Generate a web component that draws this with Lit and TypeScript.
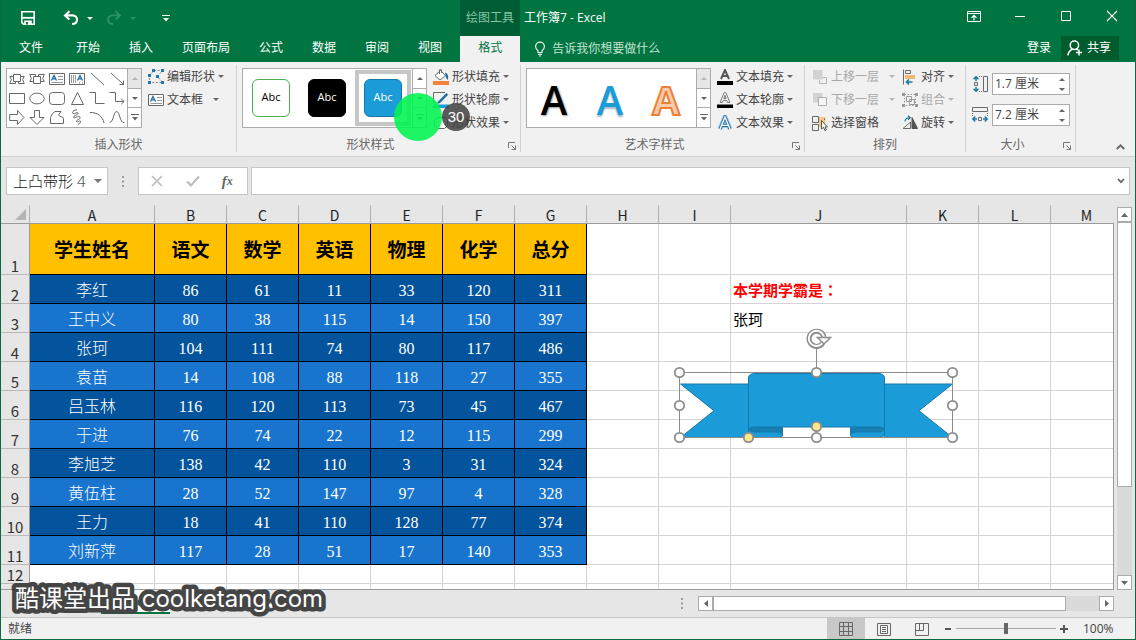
import { LitElement, html, css, svg, nothing } from "lit";
import { customElement, property, state } from "lit/decorators.js";
import { classMap } from "lit/directives/class-map.js";

const letterA = (x: number, y: number, s: number) => svg`<path d=${`M${x} ${y + s}L${x + s / 2} ${y}L${x + s} ${y + s}M${x + s * 0.22} ${y + s * 0.66}H${x + s * 0.78}`} stroke="#1f6fa5" stroke-width="1.3"/>`;

const ICONS: Record<string, unknown> = {
  save: svg`<g stroke="#fff" stroke-width="1.6"><path d="M1.8 1.8H14.2V14.2H3.6L1.8 12.6Z"/><path d="M2 7.8H14" stroke-width="1.8"/></g><path d="M4.2 10.5H11.8V14.5H4.2Z" fill="#fff" stroke="none"/><path d="M6 12H8V14.5H6Z" fill="#007541" stroke="none"/>`,
  undo: svg`<path d="M6.4 1.2L2 5.4L6.4 9.6M2.4 5.4H9.4C15.6 5.6 15.6 13.8 9 14" stroke="#fff" stroke-width="2.1"/>`,
  redo: svg`<path d="M9.6 1.2L14 5.4L9.6 9.6M13.6 5.4H6.6C.4 5.6 .4 13.8 7 14" stroke="#2b9467" stroke-width="1.9"/>`,
  display: svg`<g stroke="#fff"><path d="M1.5 3.5H14.5V13.5H1.5ZM1.5 5.5H14.5"/><path d="M8 12.5V7.5M5.5 9.8L8 7.3L10.5 9.8" stroke-width="1.2"/></g>`,
  min: svg`<path d="M3 8.5H13" stroke="#fff"/>`,
  max: svg`<path d="M3.5 3.5H12.5V12.5H3.5Z" stroke="#fff"/>`,
  close: svg`<path d="M3 3L13 13M13 3L3 13" stroke="#fff" stroke-width="1.1"/>`,
  bulb: svg`<path d="M6 11.5V9.8C4.4 8.6 3.6 7.3 3.6 5.6A4.4 4.4 0 0 1 12.4 5.6C12.4 7.3 11.6 8.6 10 9.8V11.5ZM6 13.4H10M7 15H9" stroke="#e4f3ea" stroke-width="1.2"/>`,
  person: svg`<g stroke="#fff" stroke-width="1.5"><circle cx="7.4" cy="5.2" r="4.2"/><path d="M.9 15.4C1.3 11.8 3.2 10.2 5.6 9M9.2 9L10.8 10M12 9.5V15.5M9 12.5H15"/></g>`,
  ribUp: svg`<path d="M4.5 3.5H11.5V10.5H4.5ZM4.5 5.5H.8L2.3 8.5L.8 12.5H6.5V10.5M11.5 5.5H15.2L13.7 8.5L15.2 12.5H9.5V10.5M2.5 5.5V4.5"/>`,
  ribDown: svg`<path d="M4.5 5.5H11.5V12.5H4.5ZM4.5 10.5H.8L2.3 7.5L.8 3.5H6.5V5.5M11.5 10.5H15.2L13.7 7.5L15.2 3.5H9.5V5.5"/>`,
  textH: svg`<path d="M.5 2.5H15.5V13.5H.5Z" fill="#fff"/>${letterA(2.5, 4.5, 5)}<path d="M9 5.5H14M9 8.5H14M2.5 11.5H14" stroke="#999"/>`,
  textV: svg`<path d="M.5 2.5H15.5V13.5H.5Z" fill="#fff"/>${letterA(8.5, 4.5, 5)}<path d="M2.5 4V12M4.5 4V12M6.5 4V12M13.5 11V12.5M10.5 11V12.5" stroke="#999"/>`,
  line: svg`<path d="M2 2L15 14"/>`,
  arrow: svg`<path d="M2 2L14.5 13.5M14.5 9.5V13.5H10.5"/>`,
  rect: svg`<path d="M.5 3.5H15.5V13.5H.5Z"/>`,
  oval: svg`<ellipse cx="8" cy="8.5" rx="7.2" ry="5.4"/>`,
  round: svg`<rect x=".5" y="2.5" width="15" height="12" rx="3"/>`,
  tri: svg`<path d="M8.5 2.5L14.5 14.5H2.5Z"/>`,
  elbow: svg`<path d="M.5 2.5H6.5V13.5H15.5"/>`,
  elbowArrow: svg`<path d="M.5 2.5H6.5V11.5H15M12.2 8.7L15 11.5L12.2 14.3"/>`,
  right: svg`<path d="M.7 5.5H8.5V1.5L15 8.5L8.5 15.5V11.5H.7Z"/>`,
  down: svg`<path d="M5.5 1.5H10.5V8.5H15L8 15.5L1 8.5H5.5Z"/>`,
  free: svg`<path d="M3.5 4.5L6 2.5H12L9.5 6C10 8 14.5 7 14.5 10V14.5H1.5V8.5Z"/>`,
  scribble: svg`<path d="M8 1C5 .5 2.5 3 4 4.5C5.5 5.5 8 2.5 9 4C9.5 6 4 6.5 4.5 8.5C5.5 10 9.5 6 11 8C12 10.5 7 10.5 7.5 12.5C8.5 14 11.5 10.5 11.5 12.5C11.5 14.5 10.5 15 9 15"/>`,
  arc: svg`<path d="M.8 3.5C8 3 14 7.5 15 14"/>`,
  curve: svg`<path d="M.8 13.5C4.5 13 4.5 2.5 7.5 2.5C11 2.5 10.5 14 15.5 13.8"/>`,
  edit: svg`<path d="M6 1.5H14.5L9.5 7.5L14.5 13.5H1.5V6.5Z" stroke-dasharray="2 1.6" stroke="#888"/><g fill="#1f78b0" stroke="none"><path d="M4 0H7V3H4ZM13 0H16V3H13ZM0 5H3V8H0ZM8 6H11V9H8ZM0 12H3V15H0ZM13 12H16V15H13Z"/></g>`,
  fill: svg`<path d="M2 6.5L7.5 1.5L12.5 6.5L7 11Z" fill="#fff"/><path d="M6.5 5V.8H8.6V4"/><path d="M12 3.5C15 4.5 15.8 7 14.8 11L12.8 8.2Z" fill="#1f6fa5" stroke="none"/><path d="M0 12H16V16H0Z" fill="#f5813a" stroke="none"/>`,
  outline: svg`<path d="M12 .5H.5V10.5H3"/><path d="M5 9.5L13.5 1L15.2 2.8L7 11L4 12Z" fill="#1f6fa5" stroke="none"/><path d="M0 12.5H16V16H0Z" fill="#1b9cd8" stroke="none"/>`,
  effect: svg`<path d="M4.5 2.5H11.5L14.5 5.5V10.5L11.5 13.5H4.5L1.5 10.5V5.5Z" fill="#fff"/>`,
  tFill: svg`<path d="M4 10L8 1L12 10M5.5 7H10.5" stroke="#555" stroke-width="2"/><path d="M0 12H16V16H0Z" fill="#000" stroke="none"/>`,
  tOutline: svg`<path d="M3.2 10.5L7 .8H9L12.8 10.5H10.6L9.9 8.4H6.1L5.4 10.5ZM6.8 6.6H9.2L8 3.2Z" fill="#fff" stroke-width=".9"/><path d="M0 12.5H16V16H0Z" fill="#000" stroke="none"/>`,
  tEffect: svg`<path d="M3 14L8 2L13 14M5 10.4H11" stroke="#a9cfe8" stroke-width="5"/><path d="M3 14L8 2L13 14M5 10.4H11" stroke="#1f6fa5" stroke-width="3.2"/><path d="M3 14L8 2L13 14M5 10.4H11" stroke="#fff" stroke-width="1.4"/>`,
  forward: svg`<path d="M7 8.5H14.5V14.5H7.5V11" stroke="#b5b5b5"/><path d="M1 1H10.5V10.5H1Z" fill="#d2d2d2" stroke="none"/>`,
  backward: svg`<path d="M1 1H10.5V10.5H1Z" fill="#d2d2d2" stroke="none"/><path d="M6.5 5.5H14.5V13.5H6.5Z" fill="#f6f6f6" stroke="#adadad"/>`,
  select: svg`<path d="M7 2H13.5V12H7Z" fill="#f6c98b" stroke="none"/><path d="M.5 1.5H6.5V7.5H.5ZM.5 9.5H6.5V15.5H.5ZM12.5 5V3.5"/><path d="M9.5 5.5V14L11.5 12.3L13 15.6L14.4 15L13 11.9H15.4Z" fill="#fff" stroke="#555"/>`,
  align: svg`<path d="M1.5 .5V15.5M3.5 1.5H8.5V4.5H3.5Z"/><path d="M3 6H13V10H3Z" fill="#f2b877" stroke="none"/><path d="M10.5 13H4.5M7 10.5L4.4 13L7 15.5" stroke="#1f78a0" stroke-width="1.6"/>`,
  group: svg`<path d="M2.5 2.5H13.5V13.5H2.5Z" stroke-dasharray="1.5 1.5" stroke="#999"/><path d="M4.5 4.5H9.5V9.5H4.5ZM7.5 7.5H12.5V12.5H7.5Z" stroke="#999"/><path d="M0 1H3V4H0ZM13 1H16V4H13ZM0 12H3V15H0ZM13 12H16V15H13Z" fill="#999" stroke="none"/>`,
  rotate: svg`<path d="M1 13.5H8.5V7Z"/><path d="M10 2.5L15.5 13.5H10Z" fill="#555" stroke="#555"/><path d="M3 6.5C3.2 3.5 5 2.5 8 2.8M6 .8L8.2 2.8L6 4.8" stroke="#1f78a0" stroke-width="1.2"/>`,
  height: svg`<path d="M11.5 .5H15.5V15.5H11.5Z"/><path d="M2.5 6.5H5.5V9.5H2.5Z"/><path d="M7 .5H10M7 15.5H10" stroke-dasharray="1 1"/><path d="M4 5V1M1.5 3.2L4 .8L6.5 3.2M4 11V15M1.5 12.8L4 15.2L6.5 12.8" stroke="#1f78a0" stroke-width="1.5"/>`,
  width: svg`<path d="M.5 .5H15.5V4.5H.5Z"/><path d="M6.5 10.5H9.5V13.5H6.5Z"/><path d="M.5 6V9M15.5 6V9" stroke-dasharray="1 1"/><path d="M5 12H1M3.2 9.5L.8 12L3.2 14.5M11 12H15M12.8 9.5L15.2 12L12.8 14.5" stroke="#1f78a0" stroke-width="1.5"/>`,
  cancel: svg`<path d="M3 3L13 13M13 3L3 13" stroke="#bdbdbd" stroke-width="1.6"/>`,
  check: svg`<path d="M2 8.5L6 12.5L14 3.5" stroke="#bdbdbd" stroke-width="2.2"/>`,
  normal: svg`<path d="M1.5 1.5H14.5V14.5H1.5ZM1.5 5.5H14.5M1.5 10.5H14.5M5.5 1.5V14.5M10.5 1.5V14.5"/>`,
  layout: svg`<path d="M1.5 2.5H14.5V14.5H1.5ZM4.5 4.5H11.5V12.5H4.5ZM6 6.5H10M6 8.5H10M6 10.5H10"/>`,
  pageBreak: svg`<path d="M1.5 2.5H14.5V14.5H1.5ZM1.5 9.5H9.5V2.5M5.5 2.5V9.5"/>`,
  plus: svg`<circle cx="8" cy="8" r="6.5"/><path d="M8 5V11M5 8H11"/>`,
};

const icon = (name: string) => html`<svg class="icon" width="16" height="16" viewBox="0 0 16 16" fill="none" stroke="#686868" aria-hidden="true">${ICONS[name]}</svg>`;
const caret = (up = false) => html`<svg class="caret" width="6" height="3" viewBox="0 0 6 3" aria-hidden="true"><path fill="currentColor" d=${up ? "M0 3L3 0L6 3Z" : "M0 0H6L3 3Z"}/></svg>`;
const moreCaret = () => html`<svg class="caret" width="8" height="7" viewBox="0 0 8 7" aria-hidden="true"><path fill="currentColor" d="M0 0H8V1H0ZM1 3H7L4 6.5Z"/></svg>`;

const base = css`
  * { box-sizing: border-box; }
  button { font: inherit; color: inherit; background: none; border: 0; padding: 0; margin: 0; display: flex; align-items: center; justify-content: center; }
  input { font: inherit; color: inherit; border: 0; padding: 0; margin: 0; background: none; min-width: 0; outline: none; }
  svg { display: block; flex: none; }
`;

const GALLERY = ["ribUp", "ribDown", "textH", "textV", "line", "arrow", "rect", "oval", "round", "tri", "elbow", "elbowArrow", "right", "down", "free", "scribble", "arc", "curve"];

type Cmd = { icon: string; text: string; menu?: boolean; wide?: boolean; off?: boolean };

@customElement("excel-ribbon")
export class ExcelRibbon extends LitElement {
  static styles = [base, css`
    :host { display: flex; background: #f1f1f1; border-bottom: 1px solid #d0d0d0; height: 95px; padding: 3px 0 4px; color: #444; position: relative; }
    .group { display: flex; flex-direction: column; justify-content: space-between; border-right: 1px solid #d2d2d2; padding-left: 5px; position: relative; flex: none; }
    .g1 { width: 236px; }
    .g2, .g3 { width: 284px; }
    .g4 { width: 161px; }
    .g5 { width: 110px; }
    .body { display: flex; gap: 6px; align-items: flex-start; }
    .g4 .body { padding-left: 2px; gap: 7px; }
    .g5 .body { padding-left: 1px; }
    .foot { display: flex; line-height: 14px; color: #666; margin-left: -5px; }
    .foot span { flex: 1; text-align: center; }
    .launch { width: 16px; height: 14px; }
    .gallery { display: flex; border: 1px solid #ababab; background: #fff; height: 60px; width: 185px; margin-top: 3px; flex: none; }
    .shapes { display: grid; grid-template-columns: repeat(6, 20px); grid-auto-rows: 19px; flex: none; }
    .g1 .gallery { width: 136px; }
    .styles { display: flex; width: 169px; flex: none; }
    .scroll { display: flex; flex-direction: column; flex: 1; border-left: 1px solid #ababab; color: #666; }
    .scroll button { flex: 1; border-bottom: 1px solid #ababab; width: 100%; }
    .scroll button:last-child { border-bottom: 0; }
    .scroll .off { background: #e6e6e6; color: #b5b5b5; }
    .swatch { width: 56px; height: 56px; margin-top: 1px; border: 4px solid transparent; flex: none; }
    .swatch.on { border-color: #c6c6c6; }
    .chip { width: 38px; height: 38px; border: 1px solid; border-radius: 6px; line-height: 34px; font-size: 11px; text-align: center; flex: none; }
    .c0 { border-color: #4caf50; color: #000; }
    .c1 { border-color: #000; background: #000; color: #fff; }
    .c2 { border-color: #1779ab; background: #1b9cd8; color: #fff; }
    .art { width: 56px; height: 58px; font-size: 40px; font-weight: 600; line-height: 58px; padding: 4px 2px 0 0; flex: none; }
    .a0 { color: #000; text-shadow: 1px 1px 2px #999; }
    .a1 { color: #1b9cd8; text-shadow: 0 2px 2px #a9b9c4; }
    .a2 { color: #f8cbad; -webkit-text-stroke: 2px #ee8033; font-weight: 700; }
    .cmds { display: flex; flex-direction: column; }
    .cmd { height: 23px; gap: 3px; justify-content: flex-start; white-space: nowrap; }
    .cmd .caret { color: #666; }
    .cmd.wide .caret { margin-left: 7px; }
    .cmd.off { color: #a8a8a8; }
    .cmd.off .caret { color: #b8b8b8; }
    .sizes { display: flex; flex-direction: column; gap: 9px; padding-top: 8px; }
    .size { display: flex; align-items: center; gap: 4px; }
    .spin { display: flex; width: 78px; height: 22px; border: 1px solid #ababab; background: #fff; }
    .spin input { flex: 1; padding-left: 2px; font-size: 12px; }
    .steps { display: flex; flex-direction: column; width: 15px; color: #666; }
    .steps button { flex: 1; width: 100%; }
    .collapse { margin: auto 9px 0 auto; width: 12px; height: 10px; }
    .pulse { position: absolute; left: 157px; top: 28px; width: 48px; height: 48px; border-radius: 50%; background: rgba(0, 245, 80, 0.88); }
    .count { position: absolute; left: 205px; top: 38px; width: 28px; height: 28px; border-radius: 50%; background: rgba(64, 64, 64, 0.85); color: #fff; font: 15px/28px "Liberation Sans", sans-serif; text-align: center; }
  `];

  private cmds(list: Cmd[]) {
    return html`<div class="cmds">${list.map((c) => html`
      <button class=${classMap({ cmd: true, wide: !!c.wide, off: !!c.off })} ?disabled=${!!c.off}>${icon(c.icon)}<span>${c.text}</span>${c.menu === false ? nothing : caret()}</button>`)}</div>`;
  }

  private scroller(off: boolean) {
    return html`<div class="scroll">
      <button class=${classMap({ off })} aria-label="向上">${caret(true)}</button>
      <button aria-label="向下">${caret()}</button>
      <button aria-label="其他">${moreCaret()}</button>
    </div>`;
  }

  private foot(text: string, launch: boolean) {
    return html`<div class="foot"><span>${text}</span>${launch ? html`<button class="launch" aria-label=${text + "设置"}>
      <svg width="9" height="9" viewBox="0 0 9 9" fill="none" stroke="#777"><path d="M.5 7V1.5H7M3.5 4.5L7.5 8.5M7.5 4.5V8.5H3.5"/></svg></button>` : nothing}</div>`;
  }

  private size(name: string, label: string, value: string) {
    return html`<div class="size">${icon(name)}<div class="spin"><input aria-label=${label} .value=${value} />
      <div class="steps"><button aria-label="增加">${caret(true)}</button><button aria-label="减少">${caret()}</button></div></div></div>`;
  }

  render() {
    return html`
      <section class="group g1">
        <div class="body">
          <div class="gallery"><div class="shapes">${GALLERY.map((g) => html`<button aria-label=${g}>${icon(g)}</button>`)}</div>${this.scroller(true)}</div>
          ${this.cmds([{ icon: "edit", text: "编辑形状" }, { icon: "textH", text: "文本框", wide: true }])}
        </div>
        ${this.foot("插入形状", false)}
      </section>
      <section class="group g2">
        <div class="body">
          <div class="gallery"><div class="styles">${[0, 1, 2].map((i) => html`<button class=${classMap({ swatch: true, on: i === 2 })}><span class="chip c${i}">Abc</span></button>`)}</div>${this.scroller(false)}</div>
          ${this.cmds([{ icon: "fill", text: "形状填充" }, { icon: "outline", text: "形状轮廓" }, { icon: "effect", text: "形状效果" }])}
        </div>
        ${this.foot("形状样式", true)}
        <div class="pulse"></div><div class="count">30</div>
      </section>
      <section class="group g3">
        <div class="body">
          <div class="gallery"><div class="styles">${[0, 1, 2].map((i) => html`<button class="art a${i}">A</button>`)}</div>${this.scroller(true)}</div>
          ${this.cmds([{ icon: "tFill", text: "文本填充" }, { icon: "tOutline", text: "文本轮廓" }, { icon: "tEffect", text: "文本效果" }])}
        </div>
        ${this.foot("艺术字样式", true)}
      </section>
      <section class="group g4">
        <div class="body">
          ${this.cmds([{ icon: "forward", text: "上移一层", wide: true, off: true }, { icon: "backward", text: "下移一层", wide: true, off: true }, { icon: "select", text: "选择窗格", menu: false }])}
          ${this.cmds([{ icon: "align", text: "对齐" }, { icon: "group", text: "组合", off: true }, { icon: "rotate", text: "旋转" }])}
        </div>
        ${this.foot("排列", false)}
      </section>
      <section class="group g5">
        <div class="body"><div class="sizes">${this.size("height", "高度", "1.7 厘米")}${this.size("width", "宽度", "7.2 厘米")}</div></div>
        ${this.foot("大小", true)}
      </section>
      <button class="collapse" aria-label="折叠功能区"><svg width="9" height="6" viewBox="0 0 9 6" fill="none" stroke="#666" stroke-width="1.8"><path d="M.8 5L4.5 1.3L8.2 5"/></svg></button>
    `;
  }
}

const COLUMNS = ["A", "B", "C", "D", "E", "F", "G", "H", "I", "J", "K", "L", "M"];
const HEAD = ["学生姓名", "语文", "数学", "英语", "物理", "化学", "总分"];
const ROWS: (string | number)[][] = [
  ["李红", 86, 61, 11, 33, 120, 311],
  ["王中义", 80, 38, 115, 14, 150, 397],
  ["张珂", 104, 111, 74, 80, 117, 486],
  ["袁苗", 14, 108, 88, 118, 27, 355],
  ["吕玉林", 116, 120, 113, 73, 45, 467],
  ["于进", 76, 74, 22, 12, 115, 299],
  ["李旭芝", 138, 42, 110, 3, 31, 324],
  ["黄伍柱", 28, 52, 147, 97, 4, 328],
  ["王力", 18, 41, 110, 128, 77, 374],
  ["刘新萍", 117, 28, 51, 17, 140, 353],
];

@customElement("excel-sheet")
export class ExcelSheet extends LitElement {
  static styles = [base, css`
    :host { display: block; position: relative; overflow: hidden; border-bottom: 1px solid #9b9b9b; font-family: "Noto Sans CJK SC", sans-serif; }
    :host::after { content: ""; position: absolute; right: 0; top: 18px; bottom: 0; width: 1px; background: #9b9b9b; }
    table { border-collapse: separate; border-spacing: 0; table-layout: fixed; width: 1122px; background: #fff; }
    .cr { width: 29px; }
    .ca { width: 125px; }
    .cn { width: 72px; }
    .cj { width: 176px; }
    th, td { padding: 0; border-right: 1px solid #d4d4d4; border-bottom: 1px solid #d4d4d4; font-weight: 400; overflow: hidden; white-space: nowrap; }
    .cols th { height: 19px; background: #e6e6e6; border-right-color: #b1b1b1; border-bottom-color: #9b9b9b; font-size: 14px; line-height: 14px; vertical-align: bottom; padding-bottom: 1px; color: #222; }
    .corner svg { margin-left: auto; margin-right: 3px; margin-bottom: 2px; }
    .num { background: #e6e6e6; border-right-color: #9b9b9b; border-bottom-color: #b9b9b9; font-size: 15px; line-height: 15px; vertical-align: bottom; padding-bottom: 1px; color: #333; }
    .r1 { height: 51px; }
    .rn { height: 29px; }
    .rs { height: 19px; }
    .title { background: #ffc000; border-color: #000; font-size: 19px; font-weight: 700; color: #000; text-align: center; }
    .data { border-color: #000; color: #fff; text-align: center; font: 300 16px/24px "Liberation Serif", "Noto Sans CJK SC", serif; padding-top: 4px; }
    .dark .data { background: #03549c; }
    .light .data { background: #1874cd; }
    .ask { color: #f00; font: 700 15px/20px "Noto Sans CJK TC", sans-serif; padding: 2px 0 0 2px; }
    .answer { color: #000; font-size: 15px; line-height: 20px; padding: 2px 0 0 2px; }
    .banner { position: absolute; left: 669px; top: 120px; }
  `];

  private blanks(n: number, row: number) {
    return Array.from({ length: n }, (_, i) => {
      if (row === 2 && i === 2) return html`<td class="ask">本学期学霸是：</td>`;
      if (row === 3 && i === 2) return html`<td class="answer">张珂</td>`;
      return html`<td></td>`;
    });
  }

  private handle(x: number, y: number, fill = "#fff") {
    return svg`<circle cx=${x} cy=${y} r="4.7" fill=${fill} stroke="#8c8c8c" stroke-width="1.8"/>`;
  }

  render() {
    return html`
      <table>
        <colgroup><col class="cr" />${COLUMNS.map((c) => html`<col class=${c === "A" ? "ca" : c === "J" ? "cj" : "cn"} />`)}</colgroup>
        <thead><tr class="cols"><th class="corner"><svg width="11" height="11" viewBox="0 0 11 11"><path d="M11 0V11H0Z" fill="#b4b4b4"/></svg></th>${COLUMNS.map((c) => html`<th scope="col">${c}</th>`)}</tr></thead>
        <tbody>
          <tr class="r1"><th class="num" scope="row">1</th>${HEAD.map((h) => html`<td class="title">${h}</td>`)}${this.blanks(6, 1)}</tr>
          ${ROWS.map((r, i) => html`<tr class="rn ${i % 2 ? "light" : "dark"}"><th class="num" scope="row">${i + 2}</th>${r.map((v) => html`<td class="data">${v}</td>`)}${this.blanks(6, i + 2)}</tr>`)}
          <tr class="rs"><th class="num" scope="row">12</th>${this.blanks(13, 12)}</tr>
          <tr class="rs"><th class="num" scope="row"></th>${this.blanks(13, 13)}</tr>
        </tbody>
      </table>
      <svg class="banner" width="292" height="122" viewBox="670 325 292 122" fill="none" aria-label="上凸带形">
        <g fill="#1b9cd8" stroke="#1779ab">
          <path d="M680.5 384H749V437.5H680.5L714 410.7Z"/>
          <path d="M952.5 384H884V437.5H952.5L919 410.7Z"/>
          <path d="M748.5 428V433Q749 437.5 755 437.5H779Q782.5 437.5 782.5 435V428Z"/>
          <path d="M884.5 428V433Q884 437.5 878 437.5H854Q850.5 437.5 850.5 435V428Z"/>
          <path d="M748.5 427H782.5V434Q781 432 776 432H754Q748.5 432 748.5 427Z" fill="#167fb2"/>
          <path d="M884.5 427H850.5V434Q852 432 857 432H879Q884.5 432 884.5 427Z" fill="#167fb2"/>
          <path d="M748.5 429V378Q748.5 373.5 755 373.5H878Q884.5 373.5 884.5 378V429Q884 427 878 427H755Q749 427 748.5 429Z"/>
        </g>
        <path d="M679.5 372.5H952.5V437.5H679.5ZM816.5 372V348" stroke="#8c8c8c"/>
        <path d="M822.8 343.2A7.6 7.6 0 1 1 824 337" stroke="#8c8c8c" stroke-width="5"/>
        <path d="M822.5 343A7.6 7.6 0 1 1 824 337.5" stroke="#fff" stroke-width="1.8"/>
        <path d="M817.5 337.5H830.5L824 344Z" fill="#fff" stroke="#8c8c8c" stroke-width="1.5"/>
        ${[679.5, 952.5].map((x) => [372.5, 405.5, 437.5].map((y) => this.handle(x, y)))}
        ${this.handle(816.5, 372.5)}${this.handle(816.5, 437.5)}
        ${this.handle(816.5, 426.5, "#ffe88a")}${this.handle(748.5, 437.5, "#ffe88a")}
      </svg>`;
  }
}

@customElement("app-root")
export class AppRoot extends LitElement {
  @state() private tab = "格式";
  @property({ type: Number }) zoom = 50;

  static styles = [base, css`
    :host { display: flex; flex-direction: column; height: 100vh; min-height: 400px; position: relative; overflow: hidden; box-sizing: border-box; border: solid #0a6b43; border-width: 0 1px 1px; background: #e6e6e6; font: 12px/16px "Open Sans", "Noto Sans CJK SC", sans-serif; color: #444; }
    .top { background: #007541; color: #fff; flex: none; }
    .bar { display: flex; height: 36px; }
    .quick { display: flex; align-items: center; width: 459px; padding-left: 19px; flex: none; }
    .quick .gap1 { margin-left: 27px; }
    .quick .drop { width: 15px; padding-left: 6px; }
    .quick .gap2 { margin-left: 12px; }
    .quick .more { margin-left: 25px; }
    .dim { color: #2b9467; }
    .tools { width: 60px; background: #005c34; color: #84c5a3; text-align: center; line-height: 36px; flex: none; }
    .name { padding-left: 4px; line-height: 36px; flex: 1; }
    .win { display: flex; }
    .win button { width: 46px; height: 32px; }
    .tabs { display: flex; height: 26px; align-items: stretch; padding-left: 4px; }
    .tab { padding: 0 14px 2px; margin-right: 1px; }
    .tab:first-child { margin-right: 5px; }
    .tab.on { padding: 0 18px 2px; margin: 0 0 0 3px; background: #f1f1f1; color: #007541; }
    .tell { display: flex; align-items: center; flex: 1; padding-left: 12px; gap: 4px; color: #c4e2d2; }
    .tell input { flex: 1; }
    .tell input::placeholder { color: #c4e2d2; opacity: 1; }
    .login { padding: 0 10px 2px; }
    .share { background: #005c2c; width: 58px; height: 24px; gap: 4px; padding: 0 2px 1px 0; margin-right: 16px; }
    .formula { display: flex; padding: 10px 5px 10px; height: 48px; flex: none; }
    .box { border: 1px solid #c6c6c6; background: #fff; height: 28px; display: flex; align-items: center; }
    .namebox { width: 102px; padding: 0 5px 0 6px; }
    .namebox input { flex: 1; font-size: 15px; font-weight: 300; color: #222; }
    .grip { width: 30px; display: flex; align-items: center; justify-content: center; }
    .fx { width: 110px; justify-content: space-around; padding-right: 4px; }
    .fn { font: italic 700 15px/20px "Liberation Serif", serif; color: #666; }
    .fn small { font-size: 12px; }
    .entry { flex: 1; margin-left: 3px; padding-right: 4px; }
    .entry input { flex: 1; height: 100%; }
    .work { display: flex; flex: 1; min-height: 0; }
    excel-sheet { flex: 1; min-width: 0; }
    .vbar { display: flex; flex-direction: column; width: 15px; margin: 2px 3px 0; background: #dadada; flex: none; }
    .sb { width: 15px; height: 15px; border: 1px solid #ababab; background: #fff; color: #666; flex: none; }
    .vthumb { flex: 264; border: 1px solid #ababab; background: #fff; }
    .vrest { flex: 89; }
    .sheets { display: flex; align-items: center; height: 27px; flex: none; padding-left: 100px; }
    .sheet { width: 69px; height: 24px; align-self: flex-start; background: #fff; border-bottom: 2px solid #007541; color: #007541; font-weight: 700; font-size: 13px; }
    .add { margin-left: 33px; }
    .sheets .dots { margin-left: auto; margin-right: 15px; }
    .hbar { display: flex; background: #dadada; width: 416px; margin-right: 21px; }
    .hthumb { width: 353px; border: 1px solid #ababab; background: #fff; margin-right: auto; }
    .status { display: flex; align-items: center; height: 22px; border-top: 1px solid #c6c6c6; background: #f1f1f1; flex: none; padding-left: 7px; }
    .ready { flex: 1; }
    .view { width: 38px; height: 21px; }
    .view.on { background: #c8c8c8; }
    .zoombtn { width: 14px; height: 16px; }
    .zoom { appearance: none; width: 102px; height: 16px; background: linear-gradient(#a6a6a6, #a6a6a6) center / 100px 1px no-repeat; }
    .zoom::-webkit-slider-thumb { appearance: none; width: 4px; height: 11px; background: #666; }
    .pct { width: 64px; padding-left: 12px; }
    .mark { position: absolute; left: 4px; top: 580px; pointer-events: none; }
    .mark text { font: 24px "Inter", "Noto Sans CJK SC", sans-serif; fill: #fff; stroke: #454545; stroke-width: 9px; stroke-linejoin: round; paint-order: stroke fill; }
  `];

  private dots() {
    return html`<svg class="dots" width="2" height="11" viewBox="0 0 2 11" aria-hidden="true"><path fill="#9a9a9a" d="M0 0H2V2H0ZM0 4.5H2V6.5H0ZM0 9H2V11H0Z"/></svg>`;
  }

  render() {
    const tabs = ["文件", "开始", "插入", "页面布局", "公式", "数据", "审阅", "视图", "格式"];
    return html`
      <header class="top">
        <div class="bar">
          <div class="quick">
            <button aria-label="保存">${icon("save")}</button>
            <button class="gap1" aria-label="撤消">${icon("undo")}</button>
            <button class="drop" aria-label="撤消列表">${caret()}</button>
            <button class="gap2" aria-label="恢复">${icon("redo")}</button>
            <button class="drop dim" aria-label="恢复列表">${caret()}</button>
            <button class="more" aria-label="自定义">${moreCaret()}</button>
          </div>
          <div class="tools">绘图工具</div>
          <div class="name">工作簿7 - Excel</div>
          <div class="win">
            <button aria-label="功能区显示选项">${icon("display")}</button>
            <button aria-label="最小化">${icon("min")}</button>
            <button aria-label="最大化">${icon("max")}</button>
            <button aria-label="关闭">${icon("close")}</button>
          </div>
        </div>
        <nav class="tabs">
          ${tabs.map((t) => html`<button class=${classMap({ tab: true, on: t === this.tab })} @click=${() => (this.tab = t)}>${t}</button>`)}
          <label class="tell">${icon("bulb")}<input placeholder="告诉我你想要做什么" /></label>
          <button class="login">登录</button>
          <button class="share">${icon("person")}共享</button>
        </nav>
      </header>
      <excel-ribbon></excel-ribbon>
      <div class="formula">
        <div class="box namebox"><input aria-label="名称框" .value=${"上凸带形 4"} /><svg width="8" height="4" viewBox="0 0 8 4"><path d="M0 0H8L4 4Z" fill="#777"/></svg></div>
        <div class="grip">${this.dots()}</div>
        <div class="box fx"><button aria-label="取消">${icon("cancel")}</button><button aria-label="输入">${icon("check")}</button><button class="fn" aria-label="插入函数">f<small>x</small></button></div>
        <div class="box entry"><input aria-label="编辑栏" /><svg width="8" height="6" viewBox="0 0 8 6" fill="none" stroke="#666" stroke-width="1.8"><path d="M1 1L4 4.2L7 1"/></svg></div>
      </div>
      <main class="work">
        <excel-sheet></excel-sheet>
        <div class="vbar">
          <button class="sb" aria-label="向上滚动"><svg width="7" height="4" viewBox="0 0 7 4"><path d="M0 4L3.5 0L7 4Z" fill="#666"/></svg></button>
          <div class="vthumb"></div><div class="vrest"></div>
          <button class="sb" aria-label="向下滚动"><svg width="7" height="4" viewBox="0 0 7 4"><path d="M0 0H7L3.5 4Z" fill="#666"/></svg></button>
        </div>
      </main>
      <div class="sheets">
        <button class="sheet">Sheet1</button>
        <button class="add" aria-label="新工作表">${icon("plus")}</button>
        ${this.dots()}
        <div class="hbar">
          <button class="sb" aria-label="向左滚动"><svg width="4" height="7" viewBox="0 0 4 7"><path d="M4 0V7L0 3.5Z" fill="#666"/></svg></button>
          <div class="hthumb"></div>
          <button class="sb" aria-label="向右滚动"><svg width="4" height="7" viewBox="0 0 4 7"><path d="M0 0L4 3.5L0 7Z" fill="#666"/></svg></button>
        </div>
      </div>
      <footer class="status">
        <span class="ready">就绪</span>
        <button class="view on" aria-label="普通">${icon("normal")}</button>
        <button class="view" aria-label="页面布局视图">${icon("layout")}</button>
        <button class="view" aria-label="分页预览">${icon("pageBreak")}</button>
        <button class="zoombtn" aria-label="缩小"><svg width="6" height="2"><path d="M0 0H6V2H0Z" fill="#555"/></svg></button>
        <input class="zoom" type="range" aria-label="缩放" min="0" max="100" .value=${String(this.zoom)} />
        <button class="zoombtn" aria-label="放大"><svg width="8" height="8"><path d="M3 0H5V3H8V5H5V8H3V5H0V3H3Z" fill="#555"/></svg></button>
        <span class="pct">100%</span>
      </footer>
      <svg class="mark" width="350" height="40"><text x="10" y="27">酷课堂出品 coolketang.com</text></svg>
    `;
  }
}
